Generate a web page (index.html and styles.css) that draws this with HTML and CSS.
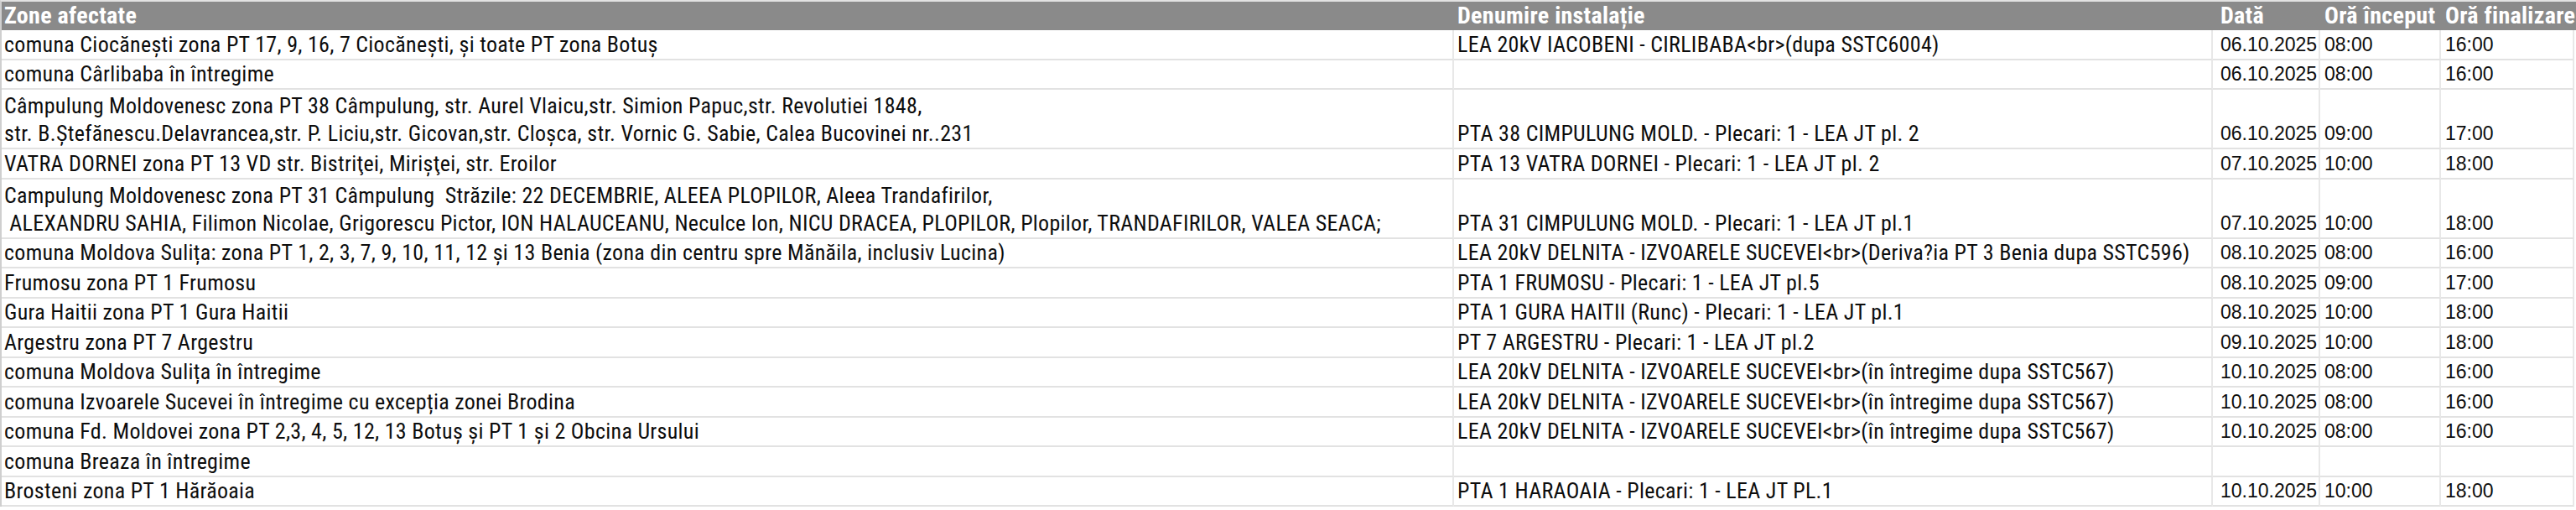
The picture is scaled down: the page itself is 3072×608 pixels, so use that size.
FILE: index.html
```html
<!DOCTYPE html>
<html lang="ro">
<head>
<meta charset="utf-8">
<title>Zone afectate</title>
<link rel="stylesheet" href="styles.css">
</head>
<body>
<div class="sheet">
  <div class="row head">
    <div class="cell c1">Zone afectate</div>
    <div class="cell c2">Denumire instalație</div>
    <div class="cell c3">Dată</div>
    <div class="cell c4">Oră început</div>
    <div class="cell c5">Oră finalizare</div>
  </div>
  <div class="row">
    <div class="cell c1">comuna Ciocănești zona PT 17, 9, 16, 7 Ciocănești, și toate PT zona Botuș</div>
    <div class="cell c2">LEA 20kV IACOBENI - CIRLIBABA&lt;br&gt;(dupa SSTC6004)</div>
    <div class="cell c3 num">06.10.2025</div>
    <div class="cell c4 num">08:00</div>
    <div class="cell c5 num">16:00</div>
  </div>
  <div class="row">
    <div class="cell c1">comuna Cârlibaba în întregime</div>
    <div class="cell c2"></div>
    <div class="cell c3 num">06.10.2025</div>
    <div class="cell c4 num">08:00</div>
    <div class="cell c5 num">16:00</div>
  </div>
  <div class="row tall">
    <div class="cell c1"><span>Câmpulung Moldovenesc zona PT 38 Câmpulung, str. Aurel Vlaicu,str. Simion Papuc,str. Revolutiei 1848,<br>str. B.Ştefănescu.Delavrancea,str. P. Liciu,str. Gicovan,str. Cloşca, str. Vornic G. Sabie, Calea Bucovinei nr..231</span></div>
    <div class="cell c2">PTA 38 CIMPULUNG MOLD. - Plecari: 1 - LEA JT pl. 2</div>
    <div class="cell c3 num">06.10.2025</div>
    <div class="cell c4 num">09:00</div>
    <div class="cell c5 num">17:00</div>
  </div>
  <div class="row">
    <div class="cell c1">VATRA DORNEI zona PT 13 VD str. Bistriţei, Mirişţei, str. Eroilor</div>
    <div class="cell c2">PTA 13 VATRA DORNEI - Plecari: 1 - LEA JT pl. 2</div>
    <div class="cell c3 num">07.10.2025</div>
    <div class="cell c4 num">10:00</div>
    <div class="cell c5 num">18:00</div>
  </div>
  <div class="row tall">
    <div class="cell c1"><span>Campulung Moldovenesc zona PT 31 Câmpulung&nbsp; Străzile: 22 DECEMBRIE, ALEEA PLOPILOR, Aleea Trandafirilor,<br>&nbsp;ALEXANDRU SAHIA, Filimon Nicolae, Grigorescu Pictor, ION HALAUCEANU, Neculce Ion, NICU DRACEA, PLOPILOR, Plopilor, TRANDAFIRILOR, VALEA SEACA;</span></div>
    <div class="cell c2">PTA 31 CIMPULUNG MOLD. - Plecari: 1 - LEA JT pl.1</div>
    <div class="cell c3 num">07.10.2025</div>
    <div class="cell c4 num">10:00</div>
    <div class="cell c5 num">18:00</div>
  </div>
  <div class="row">
    <div class="cell c1">comuna Moldova Sulița: zona PT 1, 2, 3, 7, 9, 10, 11, 12 și 13 Benia (zona din centru spre Mănăila, inclusiv Lucina)</div>
    <div class="cell c2">LEA 20kV DELNITA - IZVOARELE SUCEVEI&lt;br&gt;(Deriva?ia PT 3 Benia dupa SSTC596)</div>
    <div class="cell c3 num">08.10.2025</div>
    <div class="cell c4 num">08:00</div>
    <div class="cell c5 num">16:00</div>
  </div>
  <div class="row">
    <div class="cell c1">Frumosu zona PT 1 Frumosu</div>
    <div class="cell c2">PTA 1 FRUMOSU - Plecari: 1 - LEA JT pl.5</div>
    <div class="cell c3 num">08.10.2025</div>
    <div class="cell c4 num">09:00</div>
    <div class="cell c5 num">17:00</div>
  </div>
  <div class="row">
    <div class="cell c1">Gura Haitii zona PT 1 Gura Haitii</div>
    <div class="cell c2">PTA 1 GURA HAITII (Runc) - Plecari: 1 - LEA JT pl.1</div>
    <div class="cell c3 num">08.10.2025</div>
    <div class="cell c4 num">10:00</div>
    <div class="cell c5 num">18:00</div>
  </div>
  <div class="row">
    <div class="cell c1">Argestru zona PT 7 Argestru</div>
    <div class="cell c2">PT 7 ARGESTRU - Plecari: 1 - LEA JT pl.2</div>
    <div class="cell c3 num">09.10.2025</div>
    <div class="cell c4 num">10:00</div>
    <div class="cell c5 num">18:00</div>
  </div>
  <div class="row">
    <div class="cell c1">comuna Moldova Sulița în întregime</div>
    <div class="cell c2">LEA 20kV DELNITA - IZVOARELE SUCEVEI&lt;br&gt;(în întregime dupa SSTC567)</div>
    <div class="cell c3 num">10.10.2025</div>
    <div class="cell c4 num">08:00</div>
    <div class="cell c5 num">16:00</div>
  </div>
  <div class="row">
    <div class="cell c1">comuna Izvoarele Sucevei în întregime cu excepția zonei Brodina</div>
    <div class="cell c2">LEA 20kV DELNITA - IZVOARELE SUCEVEI&lt;br&gt;(în întregime dupa SSTC567)</div>
    <div class="cell c3 num">10.10.2025</div>
    <div class="cell c4 num">08:00</div>
    <div class="cell c5 num">16:00</div>
  </div>
  <div class="row">
    <div class="cell c1">comuna Fd. Moldovei zona PT 2,3, 4, 5, 12, 13 Botuș și PT 1 și 2 Obcina Ursului</div>
    <div class="cell c2">LEA 20kV DELNITA - IZVOARELE SUCEVEI&lt;br&gt;(în întregime dupa SSTC567)</div>
    <div class="cell c3 num">10.10.2025</div>
    <div class="cell c4 num">08:00</div>
    <div class="cell c5 num">16:00</div>
  </div>
  <div class="row">
    <div class="cell c1">comuna Breaza în întregime</div>
    <div class="cell c2"></div>
    <div class="cell c3 num"></div>
    <div class="cell c4 num"></div>
    <div class="cell c5 num"></div>
  </div>
  <div class="row">
    <div class="cell c1">Brosteni zona PT 1 Hărăoaia</div>
    <div class="cell c2">PTA 1 HARAOAIA - Plecari: 1 - LEA JT PL.1</div>
    <div class="cell c3 num">10.10.2025</div>
    <div class="cell c4 num">10:00</div>
    <div class="cell c5 num">18:00</div>
  </div>
</div>
</body>
</html>
```
FILE: styles.css
```css
html, body {
  margin: 0;
  padding: 0;
  background: #ffffff;
}

.sheet {
  width: 3070px;
  border-top: 2px solid #e2e2e2;
  border-left: 2px solid #cfcfcf;
  font-family: "Roboto Condensed", "Noto Sans Condensed", "Noto Sans", "DejaVu Sans Condensed", sans-serif;
  font-stretch: condensed;
  font-size: 26px;
  letter-spacing: 0.3px;
  color: #0d0d0d;
}

.row {
  display: grid;
  grid-template-columns: 1732px 905px 128px 144px 159px;
  height: 35.5px;
}

.row.tall {
  height: 71px;
}

.row.head {
  height: 34px;
  background: #8a8a8a;
}

.cell {
  box-sizing: border-box;
  display: flex;
  align-items: flex-end;
  padding: 0 4px 0 4px;
  border-right: 2px solid #e8e8e8;
  border-bottom: 2px solid #e2e2e2;
  white-space: nowrap;
  overflow: hidden;
  line-height: 33px;
}

.cell.c1 {
  padding-left: 3px;
}

.cell.c3 {
  padding-left: 9px;
}

.cell.c4 {
  padding-left: 5px;
}

.cell.c5 {
  padding-left: 5px;
}

.head .cell {
  color: #ffffff;
  font-size: 28px;
  font-weight: 700;
  border-right: none;
  border-bottom: none;
  line-height: 34px;
  align-items: center;
  overflow: visible;
}

.num {
  font-family: "Liberation Sans", Arial, sans-serif;
  font-stretch: normal;
  font-size: 23px;
  letter-spacing: 0;
}

.head .num {
  font-family: inherit;
  font-stretch: condensed;
  font-size: 28px;
  letter-spacing: 0.3px;
}
```
